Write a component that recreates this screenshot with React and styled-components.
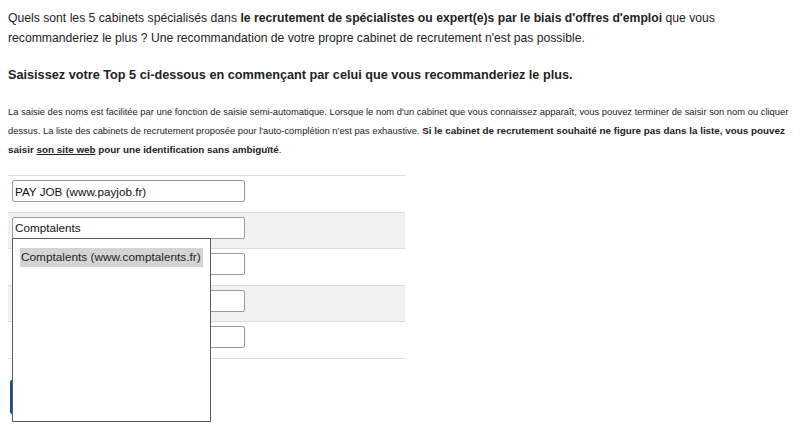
import React from "react";
import styled, { createGlobalStyle } from "styled-components";

const GlobalStyle = createGlobalStyle`
	body {
		margin: 8px;
		background: #fff;
		font-family: "Liberation Sans", Arial, sans-serif;
		color: #222;
	}
`;

const rows = [
	{ id: 1, value: "PAY JOB (www.payjob.fr)" },
	{ id: 2, value: "Comptalents", open: true },
	{ id: 3, value: "" },
	{ id: 4, value: "" },
	{ id: 5, value: "" },
];

class App extends React.Component {
	render() {
		let list = rows.map((row, index) => {
			return (
				<Row key={row.id} $striped={index % 2 === 1}>
					<Field type="text" defaultValue={row.value} />
					{row.open && (
						<Suggestions>
							<Suggestion>Comptalents (www.comptalents.fr)</Suggestion>
						</Suggestions>
					)}
				</Row>
			);
		});
		return (
			<Page>
				<GlobalStyle />
				<Intro>
					Quels sont les 5 cabinets spécialisés dans{" "}
					<b>le recrutement de spécialistes ou expert(e)s par le biais d'offres d'emploi</b>{" "}
					que vous recommanderiez le plus ? Une recommandation de votre propre cabinet de
					recrutement n'est pas possible.
				</Intro>
				<Heading>Saisissez votre Top 5 ci-dessous en commençant par celui que vous recommanderiez le plus.</Heading>
				<Help>
					La saisie des noms est facilitée par une fonction de saisie semi-automatique. Lorsque le
					nom d'un cabinet que vous connaissez apparaît, vous pouvez terminer de saisir son nom ou
					cliquer dessus. La liste des cabinets de recrutement proposée pour l'auto-complétion
					n'est pas exhaustive.{" "}
					<Strong>
						Si le cabinet de recrutement souhaité ne figure pas dans la liste, vous pouvez saisir{" "}
						<Link>son site web</Link> pour une identification sans ambiguïté
					</Strong>
					.
				</Help>
				<Table>{list}</Table>
				<Next>Suivant</Next>
			</Page>
		);
	}
}

const Page = styled.div`
	width: 784px;
	padding-bottom: 20px;
`;

const Intro = styled.p`
	margin: 0;
	font-size: 12.2px;
	line-height: 20px;
`;

const Heading = styled.p`
	margin: 17px 0 0;
	font-size: 12.7px;
	line-height: 20px;
	font-weight: bold;
`;

const Help = styled.p`
	margin: 17px 0 0;
	font-size: 9.4px;
	line-height: 19px;
`;

const Strong = styled.b`
	font-size: 9.85px;
`;

const Link = styled.span`
	text-decoration: underline;
`;

const Table = styled.div`
	margin-top: 16px;
	width: 397px;
	border-bottom: 1px solid #dcdcdc;
`;

const Row = styled.div`
	position: relative;
	box-sizing: border-box;
	height: 36.5px;
	padding: 4px 4px 0;
	border-top: 1px solid #dcdcdc;
	background: ${(p) => (p.$striped ? "#eff2f5" : "#fff")};
`;

const Field = styled.input`
	box-sizing: border-box;
	width: 233px;
	height: 22px;
	margin: 0;
	padding: 1px 2px;
	border: 1px solid #9a9a9a;
	border-radius: 2px;
	font-family: "Liberation Sans", Arial, sans-serif;
	font-size: 11.7px;
	color: #111;
	background: #fff;
`;

const Suggestions = styled.div`
	position: absolute;
	z-index: 2;
	left: 4px;
	top: 25.7px;
	box-sizing: border-box;
	width: 199px;
	height: 184px;
	padding: 9px 7px;
	border: 1px solid #5c5c5c;
	background: #fff;
`;

const Suggestion = styled.div`
	height: 19px;
	line-height: 19px;
	padding-left: 1px;
	white-space: nowrap;
	font-size: 11.8px;
	color: #222;
	background: #d4d4d4;
`;

const Next = styled.button`
	display: block;
	margin: 21px 0 0 2px;
	height: 34px;
	width: 120px;
	border: 0;
	border-radius: 2px;
	background: #1b4f8a;
	color: #fff;
	font-family: "Liberation Sans", Arial, sans-serif;
	font-size: 14px;
`;

export default App;
